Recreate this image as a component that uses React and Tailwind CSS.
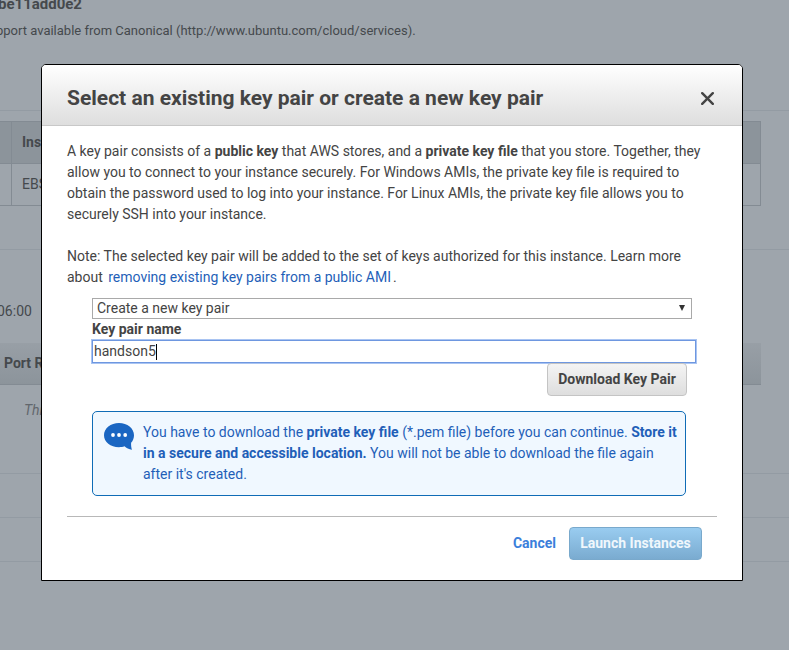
import React from "react";

function Background() {
  return (
    <div className="flex h-[650px] flex-col bg-[#9ea5ac] text-[#45494d]">
      <div className="h-[110px] shrink-0">
        <div className="-mt-[5px] -ml-[2px] h-[18px] text-[15px] leading-[18px] font-bold">be11add0e2</div>
        <div className="mt-[8px] -ml-[4px] text-[13px] leading-[20px] whitespace-nowrap">
          pport available from Canonical (http://www.ubuntu.com/cloud/services).
        </div>
      </div>
      <div className="h-px shrink-0 bg-[#939ba3]" />
      <div className="mt-[10px] w-[761px] shrink-0 border-y border-r border-[#838b93]">
        <div className="flex h-[42px] border-b border-[#838b93] bg-[#8c949b]">
          <div className="w-[12px] border-r border-[#838b93]" />
          <div className="pl-[10px] text-[14px] leading-[40px] font-bold">Instance</div>
        </div>
        <div className="flex h-[41px]">
          <div className="w-[12px] border-r border-[#838b93]" />
          <div className="pl-[10px] text-[14px] leading-[41px]">EBS only</div>
        </div>
      </div>
      <div className="mt-[43px] h-px shrink-0 bg-[#939ba3]" />
      <div className="mt-[51px] -ml-[3px] h-[20px] shrink-0 text-[14px] leading-[20px]">06:00</div>
      <div className="mt-[22px] h-[42px] w-[761px] shrink-0 border-b border-[#838b93] bg-linear-to-b from-[#989fa6] to-[#8c949b] pl-[4px] text-[14px] leading-[41px] font-bold">
        Port Range
      </div>
      <div className="mt-[15px] h-[20px] shrink-0 pl-[24px] text-[14px] leading-[20px] text-[#62676c] italic">This</div>
      <div className="mt-[53px] h-px shrink-0 bg-[#939ba3]" />
      <div className="mt-[43px] h-px shrink-0 bg-[#939ba3]" />
      <div className="mt-[43px] h-px shrink-0 bg-[#939ba3]" />
    </div>
  );
}

function SpeechIcon() {
  return (
    <svg className="mt-[11px] h-[27px] w-[30px] shrink-0" viewBox="0 0 30 27">
      <path
        d="M15 0C6.7 0 0 5.4 0 12.2C0 19 6.5 24.2 15 24.2C17 24.2 18.8 24 20.5 23.3C22.3 25 25 26.3 28 26.8C27.2 24.8 27 22.5 27.1 19.8C29 17.6 30 15 30 12.2C30 5.4 23.3 0 15 0Z"
        fill="#1a66c2"
      />
      <circle cx="9" cy="12" r="1.9" fill="#fff" />
      <circle cx="15" cy="12" r="1.9" fill="#fff" />
      <circle cx="21.2" cy="12" r="1.9" fill="#fff" />
    </svg>
  );
}

function Modal() {
  return (
    <div className="absolute top-[64px] left-[41px] flex h-[517px] w-[702px] flex-col overflow-hidden rounded-t-[5px] border border-black bg-white">
      <div className="flex h-[61px] shrink-0 items-center justify-between border-b border-[#c8c8c8] bg-linear-to-b from-white to-[#dedede] pr-[28px] pl-[25px]">
        <h1 className="mt-[6px] text-[21px] leading-[28px] font-bold whitespace-nowrap">
          Select an existing key pair or create a new key pair
        </h1>
        <svg className="mt-[7px] h-[13px] w-[13px]" viewBox="0 0 13 13">
          <path d="M1.2 1.2L11.8 11.8M11.8 1.2L1.2 11.8" stroke="#444" strokeWidth="2.4" strokeLinecap="round" />
        </svg>
      </div>
      <div className="pt-[15px] pl-[25px] text-[14px] leading-[21px] whitespace-nowrap">
        <p>
          A key pair consists of a <b>public key</b> that AWS stores, and a <b>private key file</b> that you store. Together, they
          <br />
          allow you to connect to your instance securely. For Windows AMIs, the private key file is required to
          <br />
          obtain the password used to log into your instance. For Linux AMIs, the private key file allows you to
          <br />
          securely SSH into your instance.
        </p>
        <p className="mt-[21px]">
          Note: The selected key pair will be added to the set of keys authorized for this instance. Learn more
          <br />
          about <span className="ml-[2px] text-[#1f5fb8]">removing existing key pairs from a public AMI</span>
          <span className="ml-[2px]">.</span>
        </p>
      </div>
      <div className="mt-[10px] ml-[50px] flex h-[21px] w-[600px] shrink-0 items-center justify-between border border-[#a9a9a9] pr-[6px] pl-[4px] text-[14px] leading-[19px]">
        <span>Create a new key pair</span>
        <svg className="-mt-px h-[6px] w-[6px]" viewBox="0 0 6 6">
          <path d="M0 0H6L3 6Z" fill="#333" />
        </svg>
      </div>
      <div className="ml-[50px] h-[21px] shrink-0 text-[14px] leading-[21px] font-bold">Key pair name</div>
      <div className="ml-[50px] flex h-[23px] w-[604px] shrink-0 items-center border border-[#6e97e0] pl-px text-[14px] leading-[21px] outline outline-[#a9c4f2]">
        <span>handson5</span>
        <span className="h-[16px] w-px bg-black" />
      </div>
      <div className="mr-[55px] flex h-[33px] w-[140px] shrink-0 items-center justify-center self-end rounded-[4px] border border-[#c4c4c4] bg-linear-to-b from-[#f4f4f4] to-[#dedede] text-[14px] font-bold">
        Download Key Pair
      </div>
      <div className="mt-[15px] ml-[50px] flex h-[85px] w-[594px] shrink-0 rounded-[5px] border border-[#0f6cb6] bg-[#f0f8ff] pl-[11px] text-[14px] leading-[21px] whitespace-nowrap text-[#1f5fb8]">
        <SpeechIcon />
        <p className="mt-[10px] ml-[9px]">
          You have to download the <b>private key file</b> (*.pem file) before you can continue. <b>Store it</b>
          <br />
          <b>in a secure and accessible location.</b> You will not be able to download the file again
          <br />
          after it's created.
        </p>
      </div>
      <div className="mt-[20px] ml-[25px] h-px w-[650px] shrink-0 bg-[#b8b8b8]" />
      <div className="mt-[10px] mr-[40px] flex shrink-0 items-center justify-end text-[14px] font-bold">
        <span className="mr-[13px] text-[#3b7fdb]">Cancel</span>
        <div className="flex h-[33px] w-[133px] items-center justify-center rounded-[4px] border border-[#79a9cc] bg-linear-to-b from-[#99ccf0] to-[#7aabd0] text-[#f0f7fc]">
          Launch Instances
        </div>
      </div>
    </div>
  );
}

export default function App() {
  return (
    <div className="relative h-[650px] w-[789px] overflow-hidden font-['Roboto','Liberation_Sans',sans-serif] text-[#444]">
      <Background />
      <Modal />
    </div>
  );
}
